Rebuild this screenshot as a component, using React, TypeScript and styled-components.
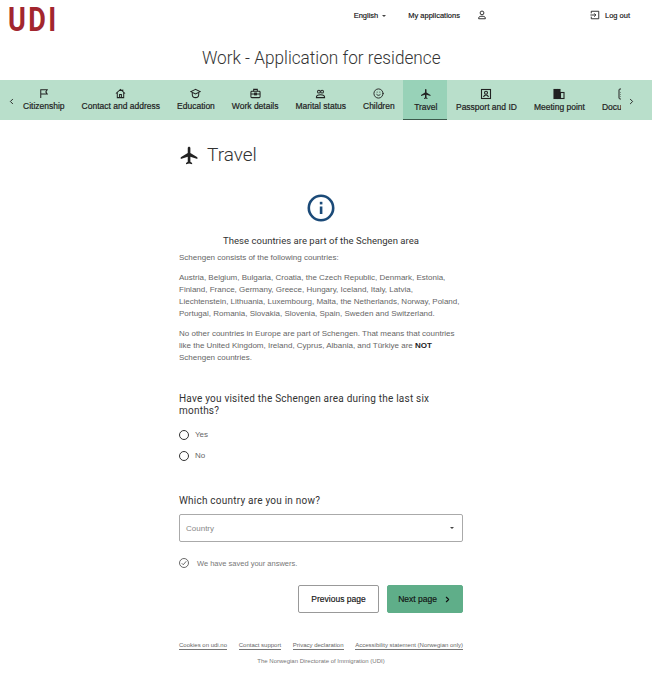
import React from "react";
import styled, { createGlobalStyle } from "styled-components";
import { ChevronLeft, ChevronRight, Smile, FileText } from "lucide-react";

const Global = createGlobalStyle`
  html, body { margin: 0; padding: 0; background: #fff; }
  body { font-family: "Liberation Sans", Arial, sans-serif; color: #333; }
  * { box-sizing: border-box; }
`;
const display = `"Roboto", "Liberation Sans", sans-serif`;

const Page = styled.div`width: 652px; height: 676px; overflow: hidden; display: flex; flex-direction: column;`;
const Header = styled.header`height: 44px; display: flex; align-items: flex-start; padding: 8px 22px 0 8px;`;
const Logo = styled.div`font-family: "Roboto", sans-serif; font-weight: 700; font-size: 33px; line-height: 24px; height: 24px; letter-spacing: 3px; color: #a2262e; transform: scaleX(.82); transform-origin: left;`;
const TopLinks = styled.nav`margin-left: auto; display: flex; align-items: center; height: 14px; font-size: 7.5px; white-space: nowrap; color: #111; -webkit-text-stroke: .15px #111;`;
const Caret = styled.span`display: inline-block; margin-left: 4px; border: 2.5px solid transparent; border-top-color: #444; border-bottom: 0; vertical-align: middle;`;
const TopLink = styled.span<{ $ml: number }>`margin-left: ${p => p.$ml}px; display: flex; align-items: center; gap: 5px;`;
const PageTitle = styled.h1`margin: 0; height: 36px; padding-right: 10px; text-align: center; font: 300 18px/28px ${display}; color: #333; transform: scaleX(.955);`;
const Tabs = styled.div`height: 40px; background: #b9dfcb; display: flex; padding-right: 11px;`;
const Arrow = styled.div<{ $w: number }>`width: ${p => p.$w}px; flex: none; display: flex; align-items: center; justify-content: center; color: #222; padding-top: 2px;`;
const TabTrack = styled.div`flex: 1; display: flex; overflow: hidden; margin-left: -8.5px; min-width: 0;`;
const Tab = styled.div<{ $active?: boolean }>`
  flex: none; height: 40px; padding: 8px ${p => (p.$active ? "10px" : "8.5px")} 0 ${p => (p.$active ? "11px" : "8.5px")};
  display: flex; flex-direction: column; align-items: center; gap: 2px;
  font-size: 8.5px; line-height: 10px; color: #222; -webkit-text-stroke: .2px #222;
  background: ${p => (p.$active ? "#98d2b8" : "transparent")};
  border-bottom: ${p => (p.$active ? "1px solid #3c5a4c" : "0")};
  svg { display: block; }
`;
const Main = styled.main`width: 284px; margin: 0 0 0 179px; display: flex; flex-direction: column;`;
const SectionTitle = styled.h2`margin: 23px 0 0; display: flex; align-items: center; gap: 7px; height: 24px; font: 300 19px/24px ${display}; color: #333;`;
const InfoWrap = styled.div`display: flex; justify-content: center; margin-top: 27px; height: 28px;`;
const InfoHead = styled.h3`margin: 13px 0 0; text-align: center; font: 400 9.5px/12px ${display}; color: #333; letter-spacing: .03px;`;
const Para = styled.p`margin: 0 0 8px; font-size: 8px; line-height: 12px; color: #666; b { color: #222; }`;
const Paras = styled.div`margin-top: 5px;`;
const Question = styled.h4`margin: 21px 0 0; max-width: 270px; font: 400 10px/12px ${display}; color: #333; letter-spacing: .22px;`;
const Radios = styled.div`margin-top: 12px; display: flex; flex-direction: column; gap: 11px;`;
const RadioRow = styled.label`display: flex; align-items: center; height: 10px; gap: 6px; font-size: 8px; color: #666;`;
const RadioDot = styled.span`width: 10px; height: 10px; border-radius: 50%; border: 1px solid #333; margin-top: 1px;`;
const Country = styled.h4`margin: 34px 0 0; font: 400 10px/14px ${display}; color: #333; letter-spacing: .22px;`;
const Select = styled.div`margin-top: 6px; height: 28px; border: 1px solid #aaa; border-radius: 2px; display: flex; align-items: center; justify-content: space-between; padding: 0 8px 0 6px; font-size: 8px; color: #888;`;
const Saved = styled.div`margin-top: 15px; display: flex; align-items: center; gap: 8px; height: 12px; font-size: 7.5px; color: #777;`;
const Buttons = styled.div`margin-top: 16px; display: flex; justify-content: flex-end; gap: 8px;`;
const Btn = styled.div<{ $primary?: boolean }>`
  height: 28px; width: ${p => (p.$primary ? 76 : 81)}px; border-radius: 2px;
  display: flex; align-items: center; justify-content: center; gap: 6px;
  font-size: 8.5px; color: #111; -webkit-text-stroke: .15px #111;
  background: ${p => (p.$primary ? "#5fae89" : "#fff")};
  border: 1px solid ${p => (p.$primary ? "#5fae89" : "#999")};
`;
const FooterLinks = styled.div`margin-top: 28px; display: flex; justify-content: space-between; font-size: 6px; line-height: 8px; color: #666;`;
const FooterLink = styled.span`border-bottom: 1px solid #777;`;
const Agency = styled.div`margin-top: 7px; text-align: center; font-size: 6px; line-height: 8px; color: #777;`;

const Plane = ({ size }: { size: number }) => (
  <svg width={size} height={size} viewBox="0 0 24 24" fill="#222"><path d="M21 16v-2l-8-5V3.5c0-.83-.67-1.5-1.5-1.5S10 2.67 10 3.5V9l-8 5v2l8-2.5V19l-2 1.5V22l3.5-1 3.5 1v-1.5L13 19v-5.5l8 2.5z" /></svg>
);
const Glyph = ({ size = 11, width = 2.2, children }: { size?: number; width?: number; children: React.ReactNode }) => (
  <svg width={size} height={size} viewBox="0 0 24 24" fill="none" stroke="#222" strokeWidth={width}>{children}</svg>
);
const FlagIcon = () => <Glyph><path d="M6 22V4h14l-3 4.5 3 4.5H6" /></Glyph>;
const HouseIcon = () => <Glyph><path d="M2 12 12 3l10 9M5 10v11h14V10M10 21v-7h4v7M17 7V3" /></Glyph>;
const EduIcon = () => <Glyph><path d="M12 3 2 8l10 5 10-5z" /><path d="M5 11v3a7 7 0 0 0 14 0v-3" /></Glyph>;
const CaseIcon = () => <Glyph><rect x="2" y="7" width="20" height="14" rx="2" /><path d="M8 7V3h8v4M2 13h20" /><rect x="10" y="11" width="4" height="4" /></Glyph>;
const CoupleIcon = () => <Glyph><circle cx="8.5" cy="8" r="3" /><circle cx="15.5" cy="8" r="3" /><path d="M3 20c0-4 4-5.500 9-5.500s9 1.500 9 5.500M2 21h20" /></Glyph>;
const PassIcon = () => <Glyph size={12}><rect x="3" y="3" width="18" height="18" /><circle cx="12" cy="9.500" r="3" /><path d="M7 18c1-3 3-4 5-4s4 1 5 4" /></Glyph>;
const BuildingIcon = () => <Glyph size={12}><rect x="2" y="3" width="6" height="18" fill="#222" /><rect x="9" y="3" width="5" height="18" fill="#222" /><rect x="15" y="9" width="7" height="12" /></Glyph>;
const PersonIcon = () => <Glyph size={10}><circle cx="12" cy="7" r="4.500" /><path d="M4 21v-2c0-3 4-4 8-4s8 1 8 4v2z" /></Glyph>;
const ExitIcon = () => <Glyph size={10}><path d="M3 8V3h18v18H3v-5M1 12h13M10 8l4 4-4 4" /></Glyph>;

const tabs: { label: string; icon: React.ReactNode; active?: boolean }[] = [
  { label: "Citizenship", icon: <FlagIcon /> },
  { label: "Contact and address", icon: <HouseIcon /> },
  { label: "Education", icon: <EduIcon /> },
  { label: "Work details", icon: <CaseIcon /> },
  { label: "Marital status", icon: <CoupleIcon /> },
  { label: "Children", icon: <Smile size={11} color="#222" strokeWidth={2} /> },
  { label: "Travel", icon: <Plane size={12} />, active: true },
  { label: "Passport and ID", icon: <PassIcon /> },
  { label: "Meeting point", icon: <BuildingIcon /> },
  { label: "Documents", icon: <FileText size={12} color="#222" strokeWidth={2} /> },
];

export default function App() {
  return (
    <Page>
      <Global />
      <Header>
        <Logo>UDI</Logo>
        <TopLinks>
          <TopLink $ml={0}><span>English<Caret /></span></TopLink>
          <TopLink $ml={22}>My applications</TopLink>
          <TopLink $ml={17}><PersonIcon /></TopLink>
          <TopLink $ml={103}><ExitIcon />Log out</TopLink>
        </TopLinks>
      </Header>
      <PageTitle>Work - Application for residence</PageTitle>
      <Tabs>
        <Arrow $w={23}><ChevronLeft size={9} strokeWidth={2.5} /></Arrow>
        <TabTrack>
          {tabs.map(t => (
            <Tab key={t.label} $active={t.active}>{t.icon}<span>{t.label}</span></Tab>
          ))}
        </TabTrack>
        <Arrow $w={20}><ChevronRight size={9} strokeWidth={2.5} /></Arrow>
      </Tabs>
      <Main>
        <SectionTitle><Plane size={21} />Travel</SectionTitle>
        <InfoWrap>
          <svg width="28" height="28" viewBox="0 0 28 28" fill="none"><circle cx="14" cy="14" r="12.2" stroke="#1b4a78" strokeWidth="2.6" /><rect x="12.8" y="12.5" width="2.6" height="7.5" fill="#1b4a78" /><rect x="12.8" y="7.8" width="2.6" height="2.6" fill="#1b4a78" /></svg>
        </InfoWrap>
        <InfoHead>These countries are part of the Schengen area</InfoHead>
        <Paras>
          <Para>Schengen consists of the following countries:</Para>
          <Para>Austria, Belgium, Bulgaria, Croatia, the Czech Republic, Denmark, Estonia, Finland, France, Germany, Greece, Hungary, Iceland, Italy, Latvia, Liechtenstein, Lithuania, Luxembourg, Malta, the Netherlands, Norway, Poland, Portugal, Romania, Slovakia, Slovenia, Spain, Sweden and Switzerland.</Para>
          <Para>No other countries in Europe are part of Schengen. That means that countries like the United Kingdom, Ireland, Cyprus, Albania, and Türkiye are <b>NOT</b> Schengen countries.</Para>
        </Paras>
        <Question>Have you visited the Schengen area during the last six months?</Question>
        <Radios>
          <RadioRow><RadioDot />Yes</RadioRow>
          <RadioRow><RadioDot />No</RadioRow>
        </Radios>
        <Country>Which country are you in now?</Country>
        <Select>Country<Caret /></Select>
        <Saved>
          <svg width="10" height="10" viewBox="0 0 20 20" fill="none" stroke="#444" strokeWidth="1.6"><circle cx="10" cy="10" r="9" /><path d="m5.500 10.500 3 3 6-7" /></svg>
          We have saved your answers.
        </Saved>
        <Buttons>
          <Btn>Previous page</Btn>
          <Btn $primary>Next page<ChevronRight size={9} strokeWidth={3} color="#111" /></Btn>
        </Buttons>
        <FooterLinks>
          <FooterLink>Cookies on udi.no</FooterLink>
          <FooterLink>Contact support</FooterLink>
          <FooterLink>Privacy declaration</FooterLink>
          <FooterLink>Accessibility statement (Norwegian only)</FooterLink>
        </FooterLinks>
        <Agency>The Norwegian Directorate of Immigration (UDI)</Agency>
      </Main>
    </Page>
  );
}
